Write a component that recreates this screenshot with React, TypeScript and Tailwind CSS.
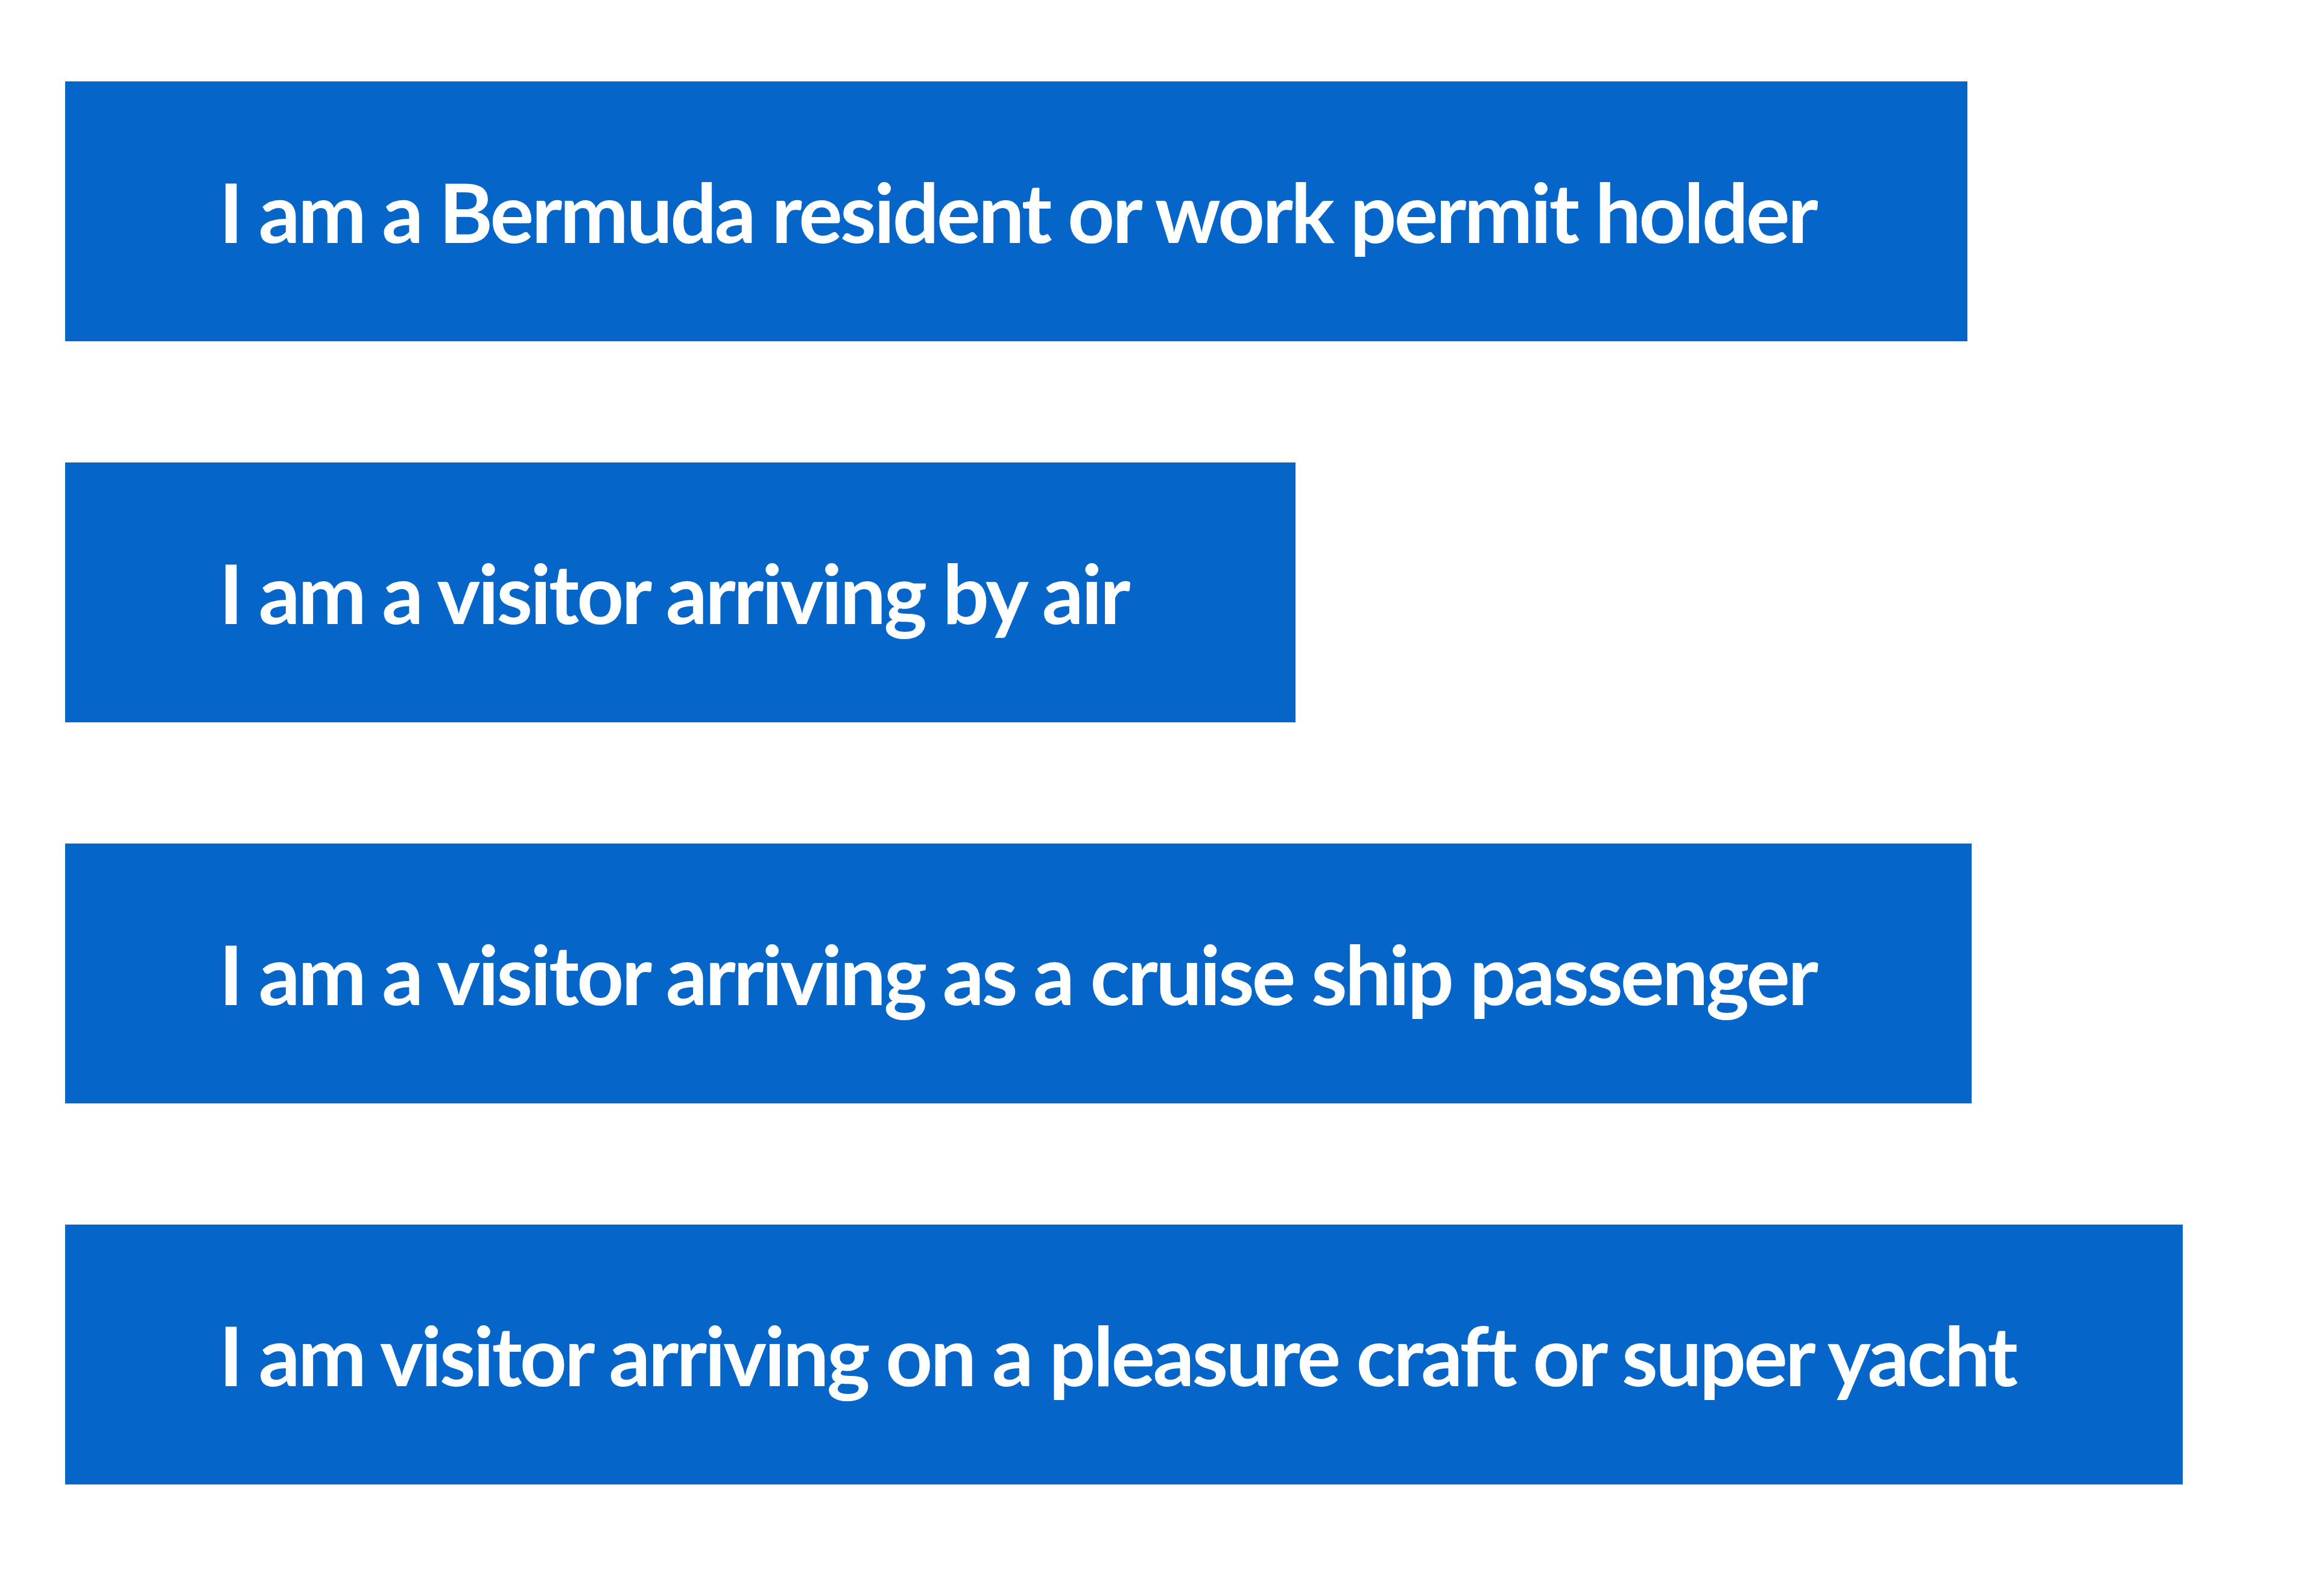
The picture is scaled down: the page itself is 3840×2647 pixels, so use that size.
import React from "react";

const items = [
  { t: "I am a Bermuda resident or work permit holder", w: "w-[3154px]" },
  { t: "I am a visitor arriving by air", w: "w-[2040px]" },
  { t: "I am a visitor arriving as a cruise ship passenger", w: "w-[3161px]" },
  { t: "I am visitor arriving on a pleasure craft or super yacht", w: "w-[3511px]" },
];

export default function App() {
  return (
    <div className="min-h-[2647px] w-[3840px] bg-white pl-[108px] pt-[135px]" style={{ fontFamily: "Lato, 'Noto Sans', sans-serif" }}>
      <div className="flex flex-col items-start gap-[201px]">
        {items.map(({ t, w }) => (
          <button
            key={t}
            className={`flex h-[431px] items-center bg-[#0565c9] pl-[255px] text-left text-[136px] font-bold leading-none tracking-[-3.8px] whitespace-nowrap text-white ${w}`}
          >
            {t}
          </button>
        ))}
      </div>
    </div>
  );
}
